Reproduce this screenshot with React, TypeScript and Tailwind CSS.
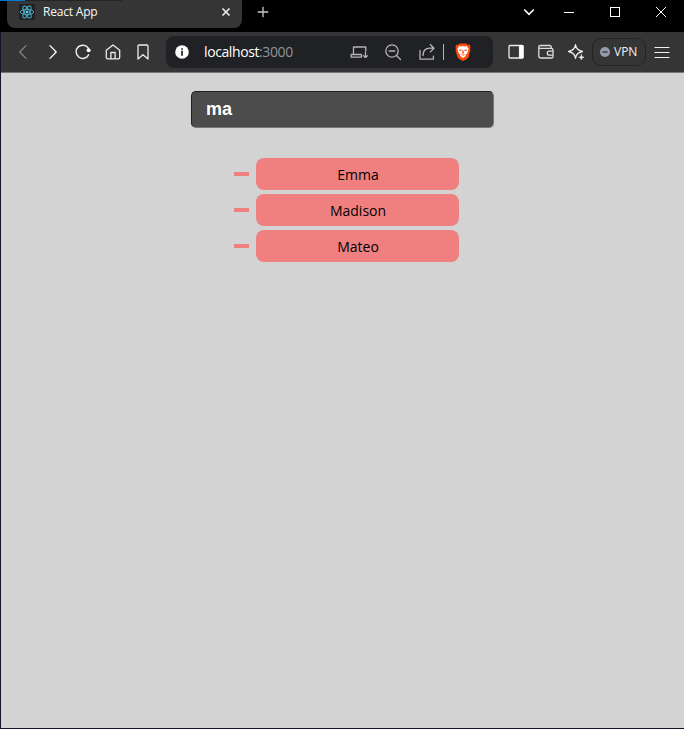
import React from "react";

type IconProps = { children: React.ReactNode; className?: string; size?: number };

function Icon({ children, className = "", size = 18 }: IconProps) {
  return (
    <svg
      width={size}
      height={size}
      viewBox={`0 0 ${size} ${size}`}
      fill="none"
      stroke="currentColor"
      strokeWidth="1.3"
      strokeLinecap="round"
      strokeLinejoin="round"
      className={"block shrink-0 " + className}
    >
      {children}
    </svg>
  );
}

function Slot({ children }: { children: React.ReactNode }) {
  return <div className="flex w-[30px] shrink-0 items-center justify-center">{children}</div>;
}

function TitleBar() {
  return (
    <div className="flex h-8 bg-black">
      <div className="ml-[7px] flex h-7 w-[235px] items-start rounded-b-lg bg-[#353535] pl-3 pt-1">
        <svg width="16" height="16" viewBox="0 0 16 16" fill="none" stroke="#4fb3cf" strokeWidth="0.9" className="shrink-0">
          <rect width="16" height="16" rx="2" fill="#202124" stroke="none" />
          <ellipse cx="8" cy="8" rx="6.7" ry="2.6" />
          <ellipse cx="8" cy="8" rx="6.7" ry="2.6" transform="rotate(60 8 8)" />
          <ellipse cx="8" cy="8" rx="6.7" ry="2.6" transform="rotate(120 8 8)" />
          <circle cx="8" cy="8" r="1.3" fill="#61dafb" stroke="none" />
        </svg>
        <span className="ml-2 w-[170px] text-[12px] leading-4 tracking-[-0.2px] text-[#f8f8f8]">React App</span>
        <svg width="16" height="16" viewBox="0 0 16 16" stroke="#f0f0f0" strokeWidth="1.6" className="ml-[5px] shrink-0">
          <path d="M4.5 4.5l7 7M11.5 4.5l-7 7" />
        </svg>
      </div>
      <div className="flex h-6 flex-1 items-center">
        <svg width="12" height="12" viewBox="0 0 12 12" stroke="#c8c8c8" strokeWidth="1.3" className="ml-[15px]">
          <path d="M6 .7v10.6M.7 6h10.6" />
        </svg>
        <svg width="12" height="8" viewBox="0 0 12 8" fill="none" stroke="#fff" strokeWidth="1.6" className="ml-auto mr-[29px]">
          <path d="M1.2 1.5L6 6.3l4.8-4.8" />
        </svg>
        <svg width="10" height="10" viewBox="0 0 10 10" stroke="#fff" className="mr-9">
          <path d="M0 5.5h10" />
        </svg>
        <svg width="10" height="10" viewBox="0 0 10 10" fill="none" stroke="#fff" className="mr-9">
          <rect x=".5" y=".5" width="9" height="9" />
        </svg>
        <svg width="10" height="10" viewBox="0 0 10 10" stroke="#fff" className="mr-[18px]">
          <path d="M0 0l10 10M10 0L0 10" />
        </svg>
      </div>
    </div>
  );
}

function AddressBar() {
  return (
    <div className="ml-2 mr-2 flex h-8 w-[327px] shrink-0 items-center rounded-lg bg-[#202124] text-[#b4b4b5]">
      <svg width="14" height="14" viewBox="0 0 14 14" className="ml-[9px] shrink-0">
        <circle cx="7" cy="7" r="6.8" fill="#fff" />
        <path d="M6.2 3.2h1.7v1.5H6.2zM6.2 5.8h1.7v5H6.2z" fill="#202124" />
      </svg>
      <span className="ml-[15px] w-[143px] text-[14px] leading-5 tracking-[-0.4px] text-white">
        localhost<span className="text-[#929395]">:3000</span>
      </span>
      <Slot>
        <Icon className="mr-[7px]">
          <path d="M3.5 10.5V4h12.3v4M1.2 14.2h10.3v-2.7H1.2zM15.5 9.2v5.3M13.6 12.7l1.9 1.9 1.9-1.9" />
        </Icon>
      </Slot>
      <Icon className="ml-[7px]">
        <circle cx="8" cy="8" r="6.2" />
        <path d="M5.2 8h5.6M12.5 12.5l4 4" />
      </Icon>
      <Icon className="ml-4">
        <path d="M2 7.5v8.7h13.4v-3M5 12.5c0-5 3-7.3 7-7.3h4M12.3 1.5L16 5.2l-3.7 3.7" />
      </Icon>
      <div className="ml-[7px] h-4 w-px bg-[#b4b4b4]" />
      <svg width="16" height="18" viewBox="0 0 16 18" className="ml-[11px] shrink-0">
        <path d="M4.8.5h6.4l1.3 1.3 1.7-.2 1.4 2.2-.5 1.8.4 1.3-2 7.3-1.6 1.8L8 18l-3.9-2-1.6-1.8-2-7.3.4-1.3-.5-1.8 1.4-2.2 1.7.2z" fill="#ff4b0a" />
        <path d="M4.2 3.1l2 .4L8 3l1.8.5 2-.4 1.8 2.7-1.3 4.4-2 1.7.8.8L8 15l-3.1-2.3.8-.8-2-1.7-1.3-4.4z" fill="#fff" />
        <path d="M3.8 6.2l3 .7-.5 1.2-1.8-.4zM12.2 6.2l-3 .7.5 1.2 1.8-.4zM7.6 7h.8l.5 3.2-.9.7-.9-.7zM6 11l2 .8 2-.8-1.2 1.6H7.2z" fill="#ff4b0a" />
      </svg>
    </div>
  );
}

function Toolbar() {
  return (
    <div className="flex h-10 items-center bg-[#353535] pl-[7px] text-[#ececec]">
      <Slot>
        <Icon className="text-[#858585]"><path d="M12 2.6L5.8 9l6.2 6.4" /></Icon>
      </Slot>
      <Slot>
        <Icon className="text-white"><path d="M6 2.6L12.2 9 6 15.4" /></Icon>
      </Slot>
      <Slot>
        <Icon>
          <path d="M14.6 11.8A6.6 6.6 0 1 1 14.3 5.2" strokeWidth="1.5" />
          <circle cx="14.6" cy="7.3" r="2" fill="#fff" stroke="none" />
        </Icon>
      </Slot>
      <Slot>
        <Icon>
          <path d="M2.3 7.2L9 2l6.7 5.2v7.3c0 .9-.5 1.4-1.4 1.4H3.7c-.9 0-1.4-.5-1.4-1.4zM6.9 15.7V9.5h4.2v6.2" />
        </Icon>
      </Slot>
      <Slot>
        <Icon><path d="M4 3.2c0-.8.4-1.2 1.2-1.2h7.6c.8 0 1.2.4 1.2 1.2v12.9l-5-4.4-5 4.4z" /></Icon>
      </Slot>
      <AddressBar />
      <Slot>
        <Icon>
          <rect x="2" y="2.5" width="14" height="12.5" rx="1" />
          <path d="M12.8 2.5H16V15h-3.2z" fill="#fff" stroke="#fff" strokeWidth="1" />
        </Icon>
      </Slot>
      <Slot>
        <Icon className="text-[#dedede]">
          <path d="M14.2 5.3V4c0-.9-.5-1.5-1.4-1.5H3.4c-1 0-1.6.5-1.6 1.4s.6 1.4 1.6 1.4h10.9c1.1 0 1.7.6 1.7 1.6v6.5c0 1-.6 1.6-1.7 1.6H3.8c-1.2 0-2-.7-2-1.9V3.9M16 8.2h-3.7a2 2 0 1 0 0 4H16z" />
        </Icon>
      </Slot>
      <Slot>
        <Icon>
          <path
            d="M8.5 1.8c.5 3 1.6 3.7 1.9 4.2.5.5 1.9 1.6 5 2.5-3.1.9-4.5 2-5 2.5-.3.5-1.4 1.2-1.9 4.2-.5-3-1.6-3.7-1.9-4.2-.5-.5-1.9-1.6-5-2.5 3.1-.9 4.5-2 5-2.5.3-.5 1.4-1.2 1.9-4.2z"
            strokeWidth="1.4"
          />
          <circle cx="14.4" cy="14.4" r="3" fill="#353535" stroke="none" />
          <path d="M14.4 11.6c.3 1.8.9 2.4 2.7 2.7-1.8.3-2.4.9-2.7 2.7-.3-1.8-.9-2.4-2.7-2.7 1.8-.3 2.4-.9 2.7-2.7z" fill="currentColor" strokeWidth=".6" />
        </Icon>
      </Slot>
      <div className="ml-px flex h-7 w-[54px] shrink-0 items-center rounded-[9px] border border-[#242424] pl-[7px]">
        <svg width="10" height="10" viewBox="0 0 10 10" className="shrink-0">
          <circle cx="5" cy="5" r="5" fill="#989bae" />
          <path d="M2.4 5h5.2" stroke="#353535" strokeWidth="1.4" />
        </svg>
        <span className="ml-[4px] text-[12px] leading-4 text-[#f0f0f0]">VPN</span>
      </div>
      <svg width="16" height="14" viewBox="0 0 16 14" stroke="#f2f2f2" strokeWidth="1.2" className="ml-2 shrink-0">
        <path d="M.5 2.5h15M.5 7.5h15M.5 12.5h15" />
      </svg>
    </div>
  );
}

const names = ["Emma", "Madison", "Mateo"];

export default function App() {
  return (
    <div className="relative flex h-[729px] w-[684px] flex-col overflow-hidden bg-black font-['Open_Sans','Noto_Sans',sans-serif]">
      <div className="absolute left-0 top-0 flex h-px w-[122px] bg-[#242424]">
        <div className="h-px w-[25px] bg-[#0078d4]" />
      </div>
      <TitleBar />
      <div className="flex flex-1 flex-col border-b border-l border-[#151525]">
        <Toolbar />
        <main className="flex flex-1 flex-col items-center border-t border-[#777] bg-[#d3d3d3] pt-[18px]">
          <input
            type="text"
            defaultValue="ma"
            className="h-[37px] w-[303px] rounded-[5px] border border-[#202020] border-b-[#777] border-r-[#777] bg-[#4c4c4c] pl-3.5 font-['Liberation_Sans',Arial,sans-serif] text-[18px] font-bold text-white outline-none"
          />
          <ul className="ml-[7px] mt-[30px] flex w-[225px] flex-col gap-1">
            {names.map((name) => (
              <li key={name} className="flex h-8 items-center justify-between">
                <span className="h-1 w-[15px] bg-[#f08080]" />
                <span className="flex h-8 w-[203px] items-center justify-center rounded-lg bg-[#f08080] pl-0.5 text-[14px] text-black">
                  {name}
                </span>
              </li>
            ))}
          </ul>
        </main>
      </div>
    </div>
  );
}
